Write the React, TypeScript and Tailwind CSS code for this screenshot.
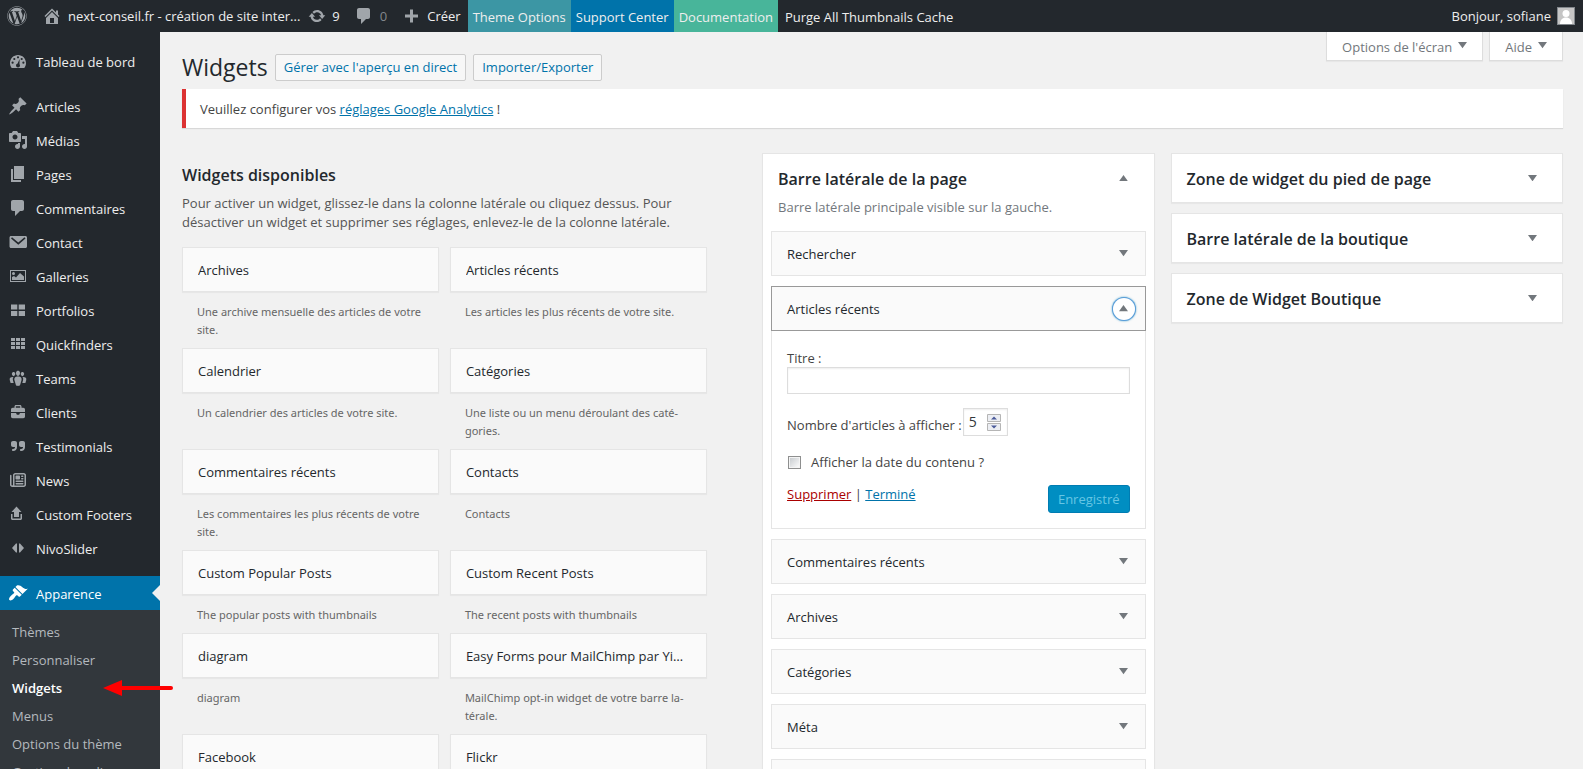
import { useState, type ReactNode } from 'react';
import clsx from 'clsx';
import { FaWordpress } from 'react-icons/fa';
import { FaBriefcase, FaQuoteRight, FaRegNewspaper } from 'react-icons/fa6';

const ICONS = {
  home: 'M16 8.5l1.53 1.53-1.06 1.06L10 4.6l-6.47 6.49-1.06-1.06L10 2.5l4 4v-2h2v4zm-6-2.46l6 5.99V18H4v-5.97zM12 17v-5H8v5h4z',
  update:
    'M10.2 3.28c3.53 0 6.43 2.61 6.92 6h2.08l-3.5 4-3.5-4h2.32c-.45-1.97-2.21-3.45-4.32-3.45-1.45 0-2.73.71-3.54 1.78L4.95 5.66C6.23 4.2 8.11 3.28 10.2 3.28zm-.4 13.44c-3.52 0-6.43-2.61-6.92-6H.8l3.5-4c1.17 1.33 2.33 2.67 3.5 4H5.48c.45 1.97 2.21 3.45 4.32 3.45 1.45 0 2.73-.71 3.54-1.78l1.71 1.95c-1.28 1.46-3.15 2.38-5.25 2.38z',
  comment: 'M5 2h9c1.1 0 2 .9 2 2v7c0 1.1-.9 2-2 2h-2l-5 5v-5H5c-1.1 0-2-.9-2-2V4c0-1.1.9-2 2-2z',
  plus: 'M17 8.5v3h-5v5H9v-5H4v-3h5v-5h3v5z',
  dashboard:
    'M3.76 17h12.48C17.34 15.63 18 13.89 18 12c0-4.41-3.58-8-8-8s-8 3.59-8 8c0 1.89.66 3.63 1.76 5zM10 5.2a1.1 1.1 0 110 2.2 1.1 1.1 0 010-2.2zM6.3 6.9a1.1 1.1 0 110 2.2 1.1 1.1 0 010-2.2zM13.7 6.9a1.1 1.1 0 110 2.2 1.1 1.1 0 010-2.2zM4.6 10.6a1.1 1.1 0 110 2.2 1.1 1.1 0 010-2.2zM15.4 10.6a1.1 1.1 0 110 2.2 1.1 1.1 0 010-2.2zM11.6 8l-.1 5.2c.3.3.5.8.5 1.3a2 2 0 11-2.4-2z',
  pin: 'M10.44 3.02l1.82-1.82 6.36 6.35-1.83 1.82c-1.05-.68-2.48-.57-3.41.36l-.75.75c-.92.93-1.04 2.35-.35 3.41l-1.83 1.82-2.41-2.41-2.8 2.79c-.42.42-3.38 2.71-3.8 2.29s1.86-3.39 2.28-3.81l2.79-2.79L4.1 9.36l1.83-1.82c1.05.69 2.48.57 3.4-.36l.75-.75c.93-.92 1.05-2.35.36-3.41z',
  media:
    'M13 11V4c0-.55-.45-1-1-1h-1.67L9 1H5L3.67 3H2c-.55 0-1 .45-1 1v7c0 .55.45 1 1 1h10c.55 0 1-.45 1-1zM7 4.5c1.38 0 2.5 1.12 2.5 2.5S8.38 9.5 7 9.5 4.5 8.38 4.5 7 5.62 4.5 7 4.5zM14 6h5v10.5c0 1.38-1.12 2.5-2.5 2.5S14 17.88 14 16.5s1.12-2.5 2.5-2.5c.17 0 .34.02.5.05V9h-3V6zm-4 8.05V13h2v3.5c0 1.38-1.12 2.5-2.5 2.5S7 17.88 7 16.5 8.12 14 9.5 14c.17 0 .34.02.5.05z',
  page: 'M6 15V2h10v13H6zm-1 1h8v2H3V5h2v11z',
  mail: 'M3 4h14.5c.8 0 1.5.7 1.5 1.5v9c0 .8-.7 1.5-1.5 1.5H3c-.8 0-1.5-.7-1.5-1.5v-9C1.5 4.7 2.2 4 3 4zM4 5.3L3 6.5l7.3 6.3 7.2-6.3-1-1.2-6.2 5.2z',
  image: 'M2 4h16v12H2V4zm1 1v10h14V5H3zM5.5 6a1.5 1.5 0 110 3 1.5 1.5 0 010-3zM4 14v-3l2-1 2 1.5L12 7l4 3.5V14H4z',
  grid: 'M3 4.5h6.3v5H3zM10.7 4.5H17v5h-6.3zM3 11h6.3v5H3zM10.7 11H17v5h-6.3z',
  gridSmall:
    'M3 4h4v3H3zM8 4h4v3H8zM13 4h4v3h-4zM3 8h4v3H3zM8 8h4v3H8zM13 8h4v3h-4zM3 12h4v3H3zM8 12h4v3H8zM13 12h4v3h-4z',
  groups:
    'M8.03 4.46c-.29 1.28.55 3.46 1.97 3.46 1.41 0 2.25-2.18 1.96-3.46-.22-.98-1.08-1.63-1.96-1.63-.89 0-1.74.65-1.97 1.63zm-4.13.9c-.25 1.08.47 2.93 1.67 2.93s1.92-1.85 1.67-2.93c-.19-.83-.92-1.39-1.67-1.39s-1.48.56-1.67 1.39zm8.86 0c-.25 1.08.47 2.93 1.66 2.93 1.2 0 1.92-1.85 1.67-2.93-.19-.83-.92-1.39-1.67-1.39-.74 0-1.47.56-1.66 1.39zm-.59 11.43l1.25-4.3C14.2 10 12.71 8.47 10 8.47c-2.72 0-4.21 1.53-3.44 4.02l1.26 4.3C8.05 17.51 9 18 10 18c.98 0 1.94-.49 2.17-1.21zM5.5 9C2.6 8.8 1.2 10 1.8 12.2l.8 2.8h3.1l-.7-2.5C4.600 11 4.800 9.900 5.500 9zM14.500 9c2.900-.2 4.300 1 3.700 3.200l-.8 2.800h-3.100l.7-2.500c.4-1.500.2-2.600-.5-3.500z',
  upload: 'M8.5 2.5l5 5.5H11v5H6V8H3.5zM3 10h1.5v4.5h8V10H14v4.5c0 .8-.7 1.5-1.5 1.5h-8c-.8 0-1.5-.7-1.5-1.5z',
  slider: 'M9 5.5v9H8L4 10l4-4.5zM11 5.5h1l4 4.5-4 4.5h-1z',
  brush:
    'M14.48 11.06L7.41 3.99l1.5-1.5c.5-.56 2.3-.47 3.51.32 1.21.8 1.43 1.28 2.91 2.1 1.18.64 2.45 1.26 4.45.85zm-.71.71L6.7 4.7 4.93 6.47c-.39.39-.39 1.02 0 1.41l1.06 1.06c.39.39.39 1.03 0 1.42-.6.6-1.43 1.11-2.21 1.69-.35.26-.7.53-1.01.84C1.43 14.23.4 16.08 1.4 17.07c.99 1 2.84-.03 4.18-1.36.31-.31.58-.66.85-1.02.57-.78 1.08-1.61 1.69-2.21.39-.39 1.02-.39 1.41 0l1.06 1.06c.39.39 1.02.39 1.41 0z',
};

function Icon({ name, className = 'h-5 w-5' }: { name: keyof typeof ICONS; className?: string }) {
  return (
    <svg viewBox="0 0 20 20" fill="currentColor" fillRule="evenodd" aria-hidden className={clsx('shrink-0', className)}>
      <path d={ICONS[name]} />
    </svg>
  );
}

function Caret({ up = false, className = 'w-[9px]' }: { up?: boolean; className?: string }) {
  return (
    <svg viewBox="0 0 10 7" fill="currentColor" aria-hidden className={className}>
      <path d={up ? 'M5 0l5 7H0z' : 'M0 0h10L5 7z'} />
    </svg>
  );
}

const MENU: { label: string; icon: ReactNode }[] = [
  { label: 'Articles', icon: <Icon name="pin" /> },
  { label: 'Médias', icon: <Icon name="media" /> },
  { label: 'Pages', icon: <Icon name="page" /> },
  { label: 'Commentaires', icon: <Icon name="comment" /> },
  { label: 'Contact', icon: <Icon name="mail" /> },
  { label: 'Galleries', icon: <Icon name="image" /> },
  { label: 'Portfolios', icon: <Icon name="grid" /> },
  { label: 'Quickfinders', icon: <Icon name="gridSmall" /> },
  { label: 'Teams', icon: <Icon name="groups" /> },
  { label: 'Clients', icon: <FaBriefcase className="h-[14px] w-[14px]" /> },
  { label: 'Testimonials', icon: <FaQuoteRight className="h-4 w-4" /> },
  { label: 'News', icon: <FaRegNewspaper className="h-4 w-4" /> },
  { label: 'Custom Footers', icon: <Icon name="upload" /> },
  { label: 'NivoSlider', icon: <Icon name="slider" /> },
];

const SUBMENU = ['Thèmes', 'Personnaliser', 'Widgets', 'Menus', 'Options du thème', 'Gestion de polices'];

const AVAILABLE = [
  ['Archives', 'Une archive mensuelle des articles de votre site.'],
  ['Articles récents', 'Les articles les plus récents de votre site.'],
  ['Calendrier', 'Un calendrier des articles de votre site.'],
  ['Catégories', 'Une liste ou un menu déroulant des caté\u00ADgories.'],
  ['Commentaires récents', 'Les commentaires les plus récents de votre site.'],
  ['Contacts', 'Contacts'],
  ['Custom Popular Posts', 'The popular posts with thumbnails'],
  ['Custom Recent Posts', 'The recent posts with thumbnails'],
  ['diagram', 'diagram'],
  ['Easy Forms pour MailChimp par Yikes', 'MailChimp opt-in widget de votre barre la\u00ADtérale.'],
  ['Facebook', 'Facebook'],
  ['Flickr', 'Flickr'],
];

const OTHER_AREAS = ['Zone de widget du pied de page', 'Barre latérale de la boutique', 'Zone de Widget Boutique'];

function AdminBar() {
  return (
    <header className="flex h-8 shrink-0 items-center bg-[#23282d] text-[13px] text-[#eee]">
      <a href="#wp" aria-label="WordPress" className="ml-[7px] text-[#a0a5aa]">
        <FaWordpress className="h-5 w-5" />
      </a>
      <a href="#site" className="ml-[15px] flex items-center gap-1.5">
        <Icon name="home" className="h-5 w-5 text-[#a0a5aa]" />
        <span className="pt-0.5">next-conseil.fr - création de site inter...</span>
      </a>
      <a href="#updates" className="ml-2 flex items-center gap-1.5">
        <Icon name="update" className="h-[18px] w-[18px] text-[#a0a5aa]" />
        <span className="pt-0.5">9</span>
      </a>
      <a href="#comments" className="ml-3.5 flex items-center gap-1.5 text-[#82878c]">
        <Icon name="comment" className="h-5 w-5 text-[#a0a5aa]" />
        <span className="pt-0.5">0</span>
      </a>
      <a href="#new" className="ml-3.5 flex items-center gap-1.5">
        <Icon name="plus" className="h-5 w-5 text-[#a0a5aa]" />
        <span className="pt-0.5">Créer</span>
      </a>
      <nav className="ml-[7px] flex h-full items-stretch leading-[34px]">
        <a href="#theme-options" className="bg-[#3c96a4] px-[5px]">Theme Options</a>
        <a href="#support" className="bg-[#0073aa] px-[5px]">Support Center</a>
        <a href="#docs" className="bg-[#48b59a] px-[5px]">Documentation</a>
        <a href="#purge" className="px-[7px]">Purge All Thumbnails Cache</a>
      </nav>
      <a href="#profile" className="ml-auto mr-2 flex items-center gap-1.5">
        <span className="pt-0.5">Bonjour, sofiane</span>
        <svg viewBox="0 0 18 18" aria-hidden className="h-[18px] w-[18px]">
          <path fill="#82878c" d="M0 0h18v18H0z" />
          <path fill="#c5c5c5" d="M1 1h16v16H1z" />
          <circle cx="9" cy="6.5" r="3.5" fill="#fff" />
          <path fill="#fff" d="M3 17c0-4 2.5-6.5 6-6.5s6 2.5 6 6.5z" />
        </svg>
      </a>
    </header>
  );
}

function MenuItem({ label, icon }: { label: string; icon: ReactNode }) {
  return (
    <li>
      <a href="#menu" className="flex h-[34px] items-center gap-2 pl-2">
        <span className="grid h-5 w-5 place-items-center text-[#a0a5aa]">{icon}</span>
        <span className="pt-1">{label}</span>
      </a>
    </li>
  );
}

function Sidebar() {
  return (
    <nav className="relative w-40 shrink-0 bg-[#23282d] pt-3 text-[13px] text-[#eee]">
      <ul>
        <MenuItem label="Tableau de bord" icon={<Icon name="dashboard" />} />
      </ul>
      <ul className="my-[11px]">
        {MENU.map((item) => (
          <MenuItem key={item.label} {...item} />
        ))}
      </ul>
      <a href="#appearance" className="relative flex h-[34px] items-center gap-2 bg-[#0073aa] pl-2 text-white">
        <Icon name="brush" />
        <span className="pt-1">Apparence</span>
        <span className="absolute right-0 top-[9px] border-y-8 border-r-8 border-y-transparent border-r-[#f1f1f1]" />
      </a>
      <ul className="bg-[#32373c] py-2 text-[#b4b9be]">
        {SUBMENU.map((label) => (
          <li key={label} className="relative">
            <a
              href="#sub"
              className={clsx('block whitespace-nowrap pl-3 leading-7', label === 'Widgets' && 'font-semibold text-white')}
            >
              {label}
            </a>
            {label === 'Widgets' && (
              <svg viewBox="0 0 70 18" aria-hidden className="absolute left-[103px] top-[5px] h-[18px] w-[70px]">
                <path d="M18 9h50" stroke="#f00" strokeWidth="4" strokeLinecap="round" />
                <path d="M0 9L19 1v16z" fill="#f00" />
              </svg>
            )}
          </li>
        ))}
      </ul>
    </nav>
  );
}

function AvailableWidgets() {
  return (
    <section className="w-[38%]">
      <h2 className="mt-2.5 text-base font-semibold leading-6 text-[#23282d]">Widgets disponibles</h2>
      <p className="mt-[7px] max-w-[500px] text-[13px] leading-[19px] text-[#555]">
        Pour activer un widget, glissez-le dans la colonne latérale ou cliquez dessus. Pour désactiver un widget et
        supprimer ses réglages, enlevez-le de la colonne latérale.
      </p>
      <div className="mt-[15px] grid grid-cols-2 gap-x-[11px]">
        {AVAILABLE.map(([title, text]) => (
          <div key={title}>
            <div className="border border-[#e5e5e5] bg-[#fafafa] pb-[11px] pl-[15px] pr-5 pt-[13px] shadow-[0_1px_1px_rgba(0,0,0,0.04)]">
              <h3 className="truncate text-[13px] font-medium leading-[19px] text-[#23282d]">{title}</h3>
            </div>
            <p className="pb-[9px] pl-[15px] pr-3 pt-[11px] font-['Noto_Sans','Open_Sans',sans-serif] text-[11px] leading-[18px] text-[#666]">
              {text}
            </p>
          </div>
        ))}
      </div>
    </section>
  );
}

function WidgetBar({ title, open = false }: { title: string; open?: boolean }) {
  return (
    <div
      className={clsx(
        'flex h-[45px] items-center justify-between border bg-[#fafafa] pl-[15px] pr-2.5 text-[13px] font-medium text-[#23282d]',
        open ? 'border-[#999]' : 'border-[#e5e5e5]',
      )}
    >
      <h3 className="pt-0.5">{title}</h3>
      <button
        type="button"
        aria-label={title}
        aria-expanded={open}
        className={clsx(
          'grid h-[22px] w-[22px] place-items-center rounded-full text-[#72777c]',
          open && 'bg-white shadow-[0_0_0_1px_#5b9dd9,0_0_2px_1px_rgba(30,140,190,0.8)]',
        )}
      >
        <Caret up={open} />
      </button>
    </div>
  );
}

function RecentPostsForm() {
  const [count, setCount] = useState(5);

  return (
    <form className="border border-t-0 border-[#e5e5e5] px-[15px] pb-[15px] pt-[18px] text-[13px] leading-[19px] text-[#444]">
      <label htmlFor="title" className="block leading-[18px]">Titre :</label>
      <input
        id="title"
        type="text"
        className="block h-[27px] w-full border border-[#ddd] bg-white px-1 shadow-[inset_0_1px_2px_rgba(0,0,0,0.07)]"
      />
      <div className="mt-3.5 flex items-center gap-px">
        <label htmlFor="count" className="pt-1.5">Nombre d'articles à afficher :</label>
        <span className="flex h-7 w-[45px] items-center border border-[#ddd] bg-white pl-[5px] shadow-[inset_0_1px_2px_rgba(0,0,0,0.07)]">
          <input
            id="count"
            type="number"
            min={1}
            value={count}
            onChange={(e) => setCount(Number(e.target.value))}
            className="w-[18px] text-sm text-[#32373c] [appearance:textfield] [&::-webkit-inner-spin-button]:appearance-none"
          />
          <svg viewBox="0 0 14 17" aria-hidden className="h-[17px] w-3.5">
            <path fill="#eceef3" stroke="#b5b5b5" d="M.5.5h13v7H.5zM.5 9.5h13v7H.5z" />
            <path fill="#4a5a9a" d="M7 2.5l3 3H4zM4 11.5h6l-3 3z" />
          </svg>
        </span>
      </div>
      <label className="mt-[17px] flex items-center gap-2.5">
        <input
          type="checkbox"
          className="ml-px h-[13px] w-[13px] appearance-none border border-[#8e8f8f] bg-gradient-to-br from-[#c4c8cc] to-white shadow-[inset_0_0_0_1px_#f4f4f4] checked:bg-[#0073aa]"
        />
        Afficher la date du contenu ?
      </label>
      <div className="mt-[13px] flex items-start justify-between">
        <p>
          <a href="#delete" className="text-[#a00] underline">Supprimer</a> |{' '}
          <a href="#done" className="text-[#0073aa] underline">Terminé</a>
        </p>
        <button
          type="button"
          disabled
          className="h-7 rounded-[3px] border border-[#007cb2] bg-[#008ec2] px-[9px] text-[#66c6e4]"
        >
          Enregistré
        </button>
      </div>
    </form>
  );
}

function PageSidebarArea() {
  return (
    <section className="border border-[#e5e5e5] bg-white px-2 pb-2 shadow-[0_1px_1px_rgba(0,0,0,0.04)]">
      <AreaTitle title="Barre latérale de la page" open />
      <p className="mb-[14px] pl-[7px] text-[13px] leading-[19px] text-[#72777c]">
        Barre latérale principale visible sur la gauche.
      </p>
      <div className="space-y-2.5">
        <WidgetBar title="Rechercher" />
        <div>
          <WidgetBar title="Articles récents" open />
          <RecentPostsForm />
        </div>
        <WidgetBar title="Commentaires récents" />
        <WidgetBar title="Archives" />
        <WidgetBar title="Catégories" />
        <WidgetBar title="Méta" />
        <WidgetBar title="Nuage d'étiquettes" />
      </div>
    </section>
  );
}

function AreaTitle({ title, open = false }: { title: string; open?: boolean }) {
  return (
    <div className={clsx('flex items-center justify-between pl-[7px] pr-2.5', open ? 'h-11 pt-1' : 'h-12')}>
      <h2 className="pt-0.5 text-base font-semibold text-[#23282d]">{title}</h2>
      <button type="button" aria-label={title} aria-expanded={open} className="grid h-6 w-6 place-items-center text-[#72777c]">
        <Caret up={open} />
      </button>
    </div>
  );
}

function ScreenTab({ children }: { children: ReactNode }) {
  return (
    <button
      type="button"
      className="flex h-[29px] items-center gap-1.5 border border-t-0 border-[#ddd] bg-white px-[15px] pt-[3px] text-[13px] text-[#72777c] shadow-[0_1px_1px_rgba(0,0,0,0.04)]"
    >
      {children}
      <Caret className="mb-1 w-[9px]" />
    </button>
  );
}

function HeadingLink({ children }: { children: ReactNode }) {
  return (
    <a
      href="#action"
      className="flex h-[27px] items-center rounded-[2px] border border-[#ccc] bg-[#f7f7f7] px-2 pt-0.5 text-[13px] font-medium text-[#0073aa]"
    >
      {children}
    </a>
  );
}

export default function App() {
  return (
    <div
      lang="fr"
      className="flex h-screen flex-col overflow-hidden bg-[#f1f1f1] font-['Open_Sans','Noto_Sans',sans-serif] text-[#444]"
    >
      <AdminBar />
      <div className="flex min-h-0 flex-1">
        <Sidebar />
        <main className="min-w-0 flex-1 pl-[22px] pr-5">
          <div className="flex h-[57px] items-start justify-between">
            <div className="flex items-center gap-[7px] pt-[18px]">
              <h1 className="text-[23px] leading-[34px] text-[#23282d]">Widgets</h1>
              <HeadingLink>Gérer avec l'aperçu en direct</HeadingLink>
              <HeadingLink>Importer/Exporter</HeadingLink>
            </div>
            <div className="flex gap-1.5">
              <ScreenTab>Options de l'écran</ScreenTab>
              <ScreenTab>Aide</ScreenTab>
            </div>
          </div>
          <p className="border-l-4 border-[#dc3232] bg-white px-3.5 pb-[9px] pt-[11px] text-[13px] leading-[19px] shadow-[0_1px_1px_rgba(0,0,0,0.1)]">
            Veuillez configurer vos{' '}
            <a href="#analytics" className="text-[#0073aa] underline">réglages Google Analytics</a> !
          </p>
          <div className="mt-[25px] flex items-start justify-between">
            <AvailableWidgets />
            <div className="grid w-[58%] grid-cols-2 items-start gap-x-4">
              <PageSidebarArea />
              <div className="space-y-2.5">
                {OTHER_AREAS.map((title) => (
                  <section key={title} className="border border-[#e5e5e5] bg-white px-2 shadow-[0_1px_1px_rgba(0,0,0,0.04)]">
                    <AreaTitle title={title} />
                  </section>
                ))}
              </div>
            </div>
          </div>
        </main>
      </div>
    </div>
  );
}
